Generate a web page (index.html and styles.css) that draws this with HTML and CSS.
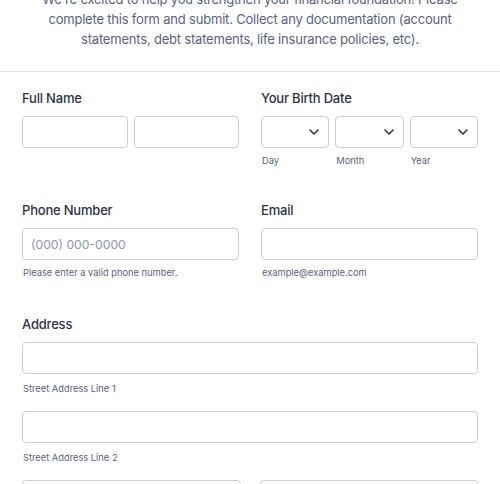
FILE: index.html
```html
<!DOCTYPE html>
<html>
<head>
<meta charset="utf-8">
<link rel="stylesheet" href="styles.css">
</head>
<body>
<div class="page">
  <header class="intro">
    <p class="intro-text">We're excited to help you strengthen your financial foundation! Please complete this form and submit. Collect any documentation (account statements, debt statements, life insurance policies, etc).</p>
  </header>
  <form class="form">
    <div class="row row-1 two-col">
      <div class="field">
        <label class="label">Full Name</label>
        <div class="split split-2">
          <div class="input"></div>
          <div class="input"></div>
        </div>
      </div>
      <div class="field">
        <label class="label">Your Birth Date</label>
        <div class="split split-3">
          <div class="part">
            <div class="input select"><svg class="chev" viewBox="0 0 10 6" width="10" height="6"><path d="M1 1l4 4 4-4" fill="none" stroke="#2c3345" stroke-width="1.6" stroke-linecap="round" stroke-linejoin="round"/></svg></div>
            <span class="sub">Day</span>
          </div>
          <div class="part">
            <div class="input select"><svg class="chev" viewBox="0 0 10 6" width="10" height="6"><path d="M1 1l4 4 4-4" fill="none" stroke="#2c3345" stroke-width="1.6" stroke-linecap="round" stroke-linejoin="round"/></svg></div>
            <span class="sub">Month</span>
          </div>
          <div class="part">
            <div class="input select"><svg class="chev" viewBox="0 0 10 6" width="10" height="6"><path d="M1 1l4 4 4-4" fill="none" stroke="#2c3345" stroke-width="1.6" stroke-linecap="round" stroke-linejoin="round"/></svg></div>
            <span class="sub">Year</span>
          </div>
        </div>
      </div>
    </div>

    <div class="row row-2 two-col">
      <div class="field">
        <label class="label">Phone Number</label>
        <div class="input"><span class="placeholder">(000) 000-0000</span></div>
        <span class="sub">Please enter a valid phone number.</span>
      </div>
      <div class="field">
        <label class="label">Email</label>
        <div class="input"></div>
        <span class="sub">example@example.com</span>
      </div>
    </div>

    <div class="row">
      <div class="field">
        <label class="label">Address</label>
        <div class="input"></div>
        <span class="sub sub-addr">Street Address Line 1</span>
        <div class="input addr-next"></div>
        <span class="sub sub-addr">Street Address Line 2</span>
        <div class="split-city">
          <div class="input"></div>
          <div class="input"></div>
        </div>
      </div>
    </div>
  </form>
</div>
</body>
</html>
```

FILE: styles.css
```css
* { box-sizing: border-box; }
html, body { margin: 0; padding: 0; background: #ffffff; }
body {
  font-family: Inter, "Noto Sans", "Liberation Sans", sans-serif;
  color: #2c3345;
  overflow: hidden;
}
.page { width: 500px; }
.intro {
  border-bottom: 1px solid #e6e8ef;
  padding: 0 30px 22px;
}
.intro-text {
  margin: -11px 0 0;
  font-size: 13px;
  letter-spacing: -0.2px;
  line-height: 20px;
  color: #57647e;
  text-align: center;
}
.form { padding: 16px 22px 0; }
.row-1 { margin-bottom: 32px; }
.row-2 { margin-bottom: 34px; }
.two-col {
  display: grid;
  grid-template-columns: 1fr 1fr;
  column-gap: 22px;
}
.field { display: flex; flex-direction: column; }
.label {
  font-size: 13px;
  letter-spacing: -0.2px;
  line-height: 20px;
  font-weight: 500;
  color: #2c3345;
  margin-bottom: 8px;
}
.split { display: grid; column-gap: 6px; }
.split-2 { grid-template-columns: 1fr 1fr; }
.split-3 { grid-template-columns: 1fr 1fr 1fr; }
.part { display: flex; flex-direction: column; }
.input {
  height: 32px;
  border: 1px solid #c9cfdb;
  border-radius: 4px;
  background: #fff;
  display: flex;
  align-items: center;
  padding: 0 8px;
}
.select { justify-content: flex-end; padding-right: 9px; }
.chev { display: block; }
.placeholder { font-size: 12.2px; color: #8f96a8; }
.sub {
  font-size: 9.3px;
  line-height: 14px;
  color: #57647e;
  margin-top: 6px;
  padding-left: 1px;
}
.sub-addr { margin-top: 8px; }
.addr-next { margin-top: 15px; }
.split-city {
  margin-top: 15px;
  display: grid;
  grid-template-columns: 1fr 1fr;
  column-gap: 19px;
}
```
